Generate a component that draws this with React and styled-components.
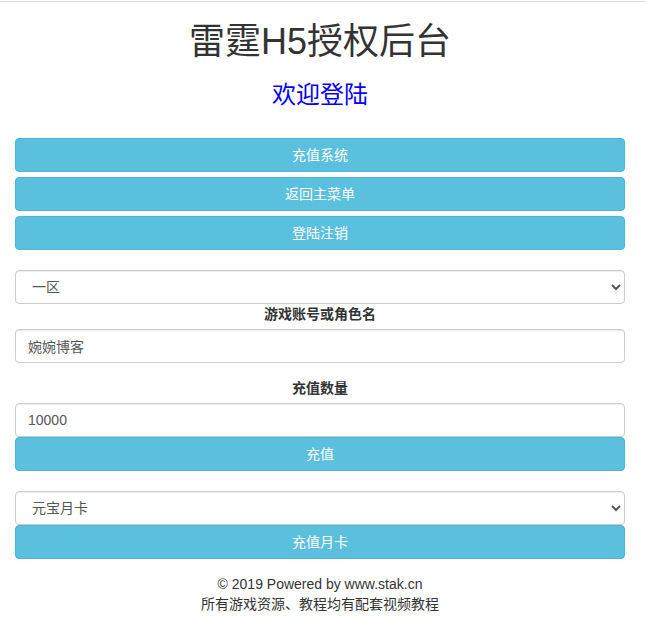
import React from "react";
import styled, { createGlobalStyle } from "styled-components";

const Global = createGlobalStyle`
  html, body { margin: 0; padding: 0; background: #fff; }
  body {
    font-family: "Liberation Sans", "Noto Sans CJK SC", sans-serif;
    font-size: 14px;
    line-height: 1.42857143;
    color: #333;
  }
  * { box-sizing: border-box; }
`;

const TopRule = styled.div`
  margin-top: 1px;
  border-top: 1px solid #dcdcdc;
`;

const Page = styled.div`
  width: 640px;
  padding: 0 15px;
`;

const Title = styled.h1`
  margin: 20px 0 10px;
  font-size: 36px;
  font-weight: 400;
  line-height: 1.1;
  text-align: center;
  color: #333;
`;

const Welcome = styled.h3`
  margin: 20px 0 30px;
  font-size: 24px;
  font-weight: 400;
  line-height: 1.1;
  text-align: center;
  color: #0000ff;
`;

const Stack = styled.div`
  display: flex;
  flex-direction: column;
  gap: ${(p) => p.$gap || 0}px;
  margin-bottom: ${(p) => p.$after || 0}px;
`;

const Button = styled.button`
  display: block;
  width: 100%;
  height: 34px;
  padding: 6px 12px;
  font-family: inherit;
  font-size: 14px;
  line-height: 20px;
  color: #fff;
  background: #5bc0de;
  border: 1px solid #46b8da;
  border-radius: 4px;
  text-align: center;
  cursor: pointer;
`;

const Select = styled.select`
  display: block;
  width: 100%;
  height: 34px;
  padding: 6px 12px;
  font-family: inherit;
  font-size: 14px;
  line-height: 20px;
  color: #555;
  background: #fff;
  border: 1px solid #ccc;
  border-radius: 4px;
  box-shadow: inset 0 1px 1px rgba(0, 0, 0, 0.075);
`;

const Input = styled.input`
  display: block;
  width: 100%;
  height: 34px;
  padding: 6px 12px;
  font-family: inherit;
  font-size: 14px;
  line-height: 20px;
  color: #555;
  background: #fff;
  border: 1px solid #ccc;
  border-radius: 4px;
  box-shadow: inset 0 1px 1px rgba(0, 0, 0, 0.075);
`;

const Label = styled.label`
  display: block;
  margin: ${(p) => p.$top || 0}px 0 5px;
  font-weight: 700;
  line-height: 20px;
  text-align: center;
`;

const Footer = styled.footer`
  margin-top: 15px;
  text-align: center;
  line-height: 20px;
  color: #333;
`;

export default function App() {
  return (
    <>
      <Global />
      <TopRule />
      <Page>
        <Title>雷霆H5授权后台</Title>
        <Welcome>欢迎登陆</Welcome>
        <Stack $gap={5} $after={20}>
          <Button>充值系统</Button>
          <Button>返回主菜单</Button>
          <Button>登陆注销</Button>
        </Stack>
        <Select defaultValue="1">
          <option value="1">一区</option>
        </Select>
        <Label>游戏账号或角色名</Label>
        <Input defaultValue="婉婉博客" />
        <Label $top={15}>充值数量</Label>
        <Stack $after={20}>
          <Input defaultValue="10000" />
          <Button>充值</Button>
        </Stack>
        <Stack>
          <Select defaultValue="m">
            <option value="m">元宝月卡</option>
          </Select>
          <Button>充值月卡</Button>
        </Stack>
        <Footer>
          <div>© 2019 Powered by www.stak.cn</div>
          <div>所有游戏资源、教程均有配套视频教程</div>
        </Footer>
      </Page>
    </>
  );
}
